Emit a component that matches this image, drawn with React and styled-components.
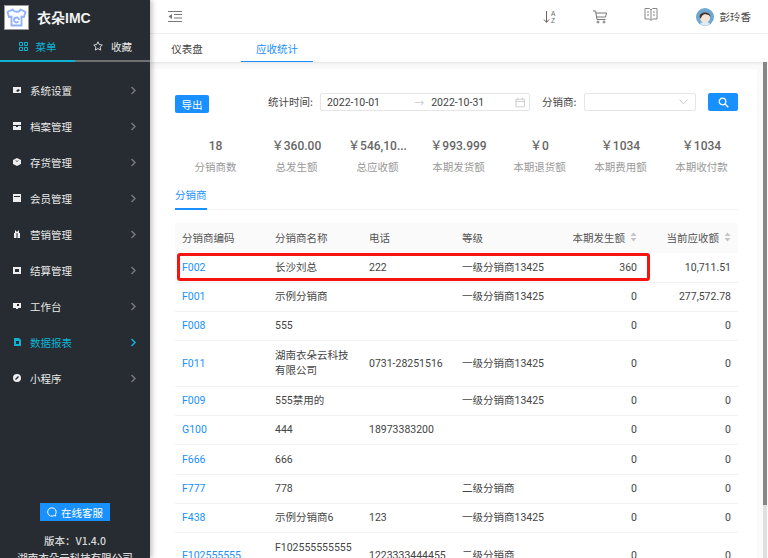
import React from "react";
import styled, { createGlobalStyle } from "styled-components";

const Global = createGlobalStyle`
  html, body { margin: 0; padding: 0; width: 768px; height: 558px; overflow: hidden; }
  body { font-family: "Noto Sans CJK SC", "Liberation Sans", sans-serif; font-size: 10.5px; color: #333; }
  * { box-sizing: border-box; }
`;
const Shell = styled.div`display: flex; width: 768px; height: 558px; overflow: hidden; background: #fafafa;`;
const Sidebar = styled.aside`
  width: 150px; flex: none; height: 558px; background: #262c31; display: flex; flex-direction: column;
  box-shadow: 2px 0 5px rgba(0,0,0,.25); position: relative; z-index: 2; overflow: hidden;
`;
const Brand = styled.div`height: 34px; display: flex; align-items: center; padding: 0 0 0 4px; gap: 8px;`;
const Logo = styled.div`width: 25px; height: 25px; background: #fff; border: 1px solid #999; display: flex; align-items: center; justify-content: center;`;
const BrandName = styled.div`color: #f2f2f2; font-size: 14px; font-weight: 700; font-family: "Liberation Sans", "Noto Sans CJK SC", sans-serif;`;
const SideTabs = styled.div`display: flex; height: 28px;`;
const SideTab = styled.div`
  width: 75px; display: flex; align-items: center; justify-content: center; gap: 8px; font-size: 10.5px; padding-bottom: 2px;
  color: ${p => (p.$on ? "#10b2d4" : "#e8e8e8")};
  border-bottom: 2px solid ${p => (p.$on ? "#10b2d4" : "#707070")};
`;
const Menu = styled.nav`padding-top: 10px; display: flex; flex-direction: column;`;
const MenuItem = styled.div`
  height: 36px; display: flex; align-items: center; padding-left: 13px; font-size: 10.5px;
  color: ${p => (p.$on ? "#10b2d4" : "#eaeaea")};
`;
const MenuIcon = styled.span`width: 8px; height: 8px; display: flex; margin-right: 9px;`;
const MenuText = styled.span`flex: 1;`;
const Chevron = styled.svg`width: 7px; height: 9px; margin-right: 13px;`;
const SideFoot = styled.div`margin-top: auto; margin-bottom: -7px; display: flex; flex-direction: column; align-items: center;`;
const Service = styled.div`
  width: 70px; height: 18px; background: #1890ff; color: #fff; display: flex; align-items: center; justify-content: center; gap: 4px; font-size: 10.5px; margin-bottom: 12px;
`;
const Version = styled.div`color: #d8d8d8; font-size: 10.5px; line-height: 15px; font-weight: 500; white-space: nowrap; & + & { margin-top: 2px; }`;
const Main = styled.main`flex: 1; min-width: 0; display: flex; flex-direction: column; position: relative;`;
const Header = styled.header`
  height: 34px; background: #fff; border-bottom: 1px solid #f3f3f3; display: flex; align-items: center; padding: 0 17px 0 18px; flex: none;
`;
const HeadIcons = styled.div`margin-left: auto; display: flex; align-items: center;`;
const HeadIcon = styled.span`display: flex; width: 16px; height: 16px; margin-right: ${p => p.$gap}px; margin-top: ${p => p.$up ? -3 : 0}px;`;
const User = styled.div`display: flex; align-items: center; gap: 6px; font-size: 10.5px; color: #444;`;
const Tabs = styled.div`height: 28px; background: #fff; display: flex; padding-left: 17px; box-shadow: 0 1px 3px rgba(0,0,0,.1); flex: none; position: relative; z-index: 1;`;
const TopTab = styled.div`
  width: ${p => p.$w}px; margin-right: ${p => p.$mr || 0}px; display: flex; align-items: center; justify-content: center; font-size: 10.5px; padding-top: 1px;
  color: ${p => (p.$on ? "#1890ff" : "#444")};
  border-bottom: ${p => (p.$on ? "1px solid #1890ff" : "0")};
`;
const Body = styled.div`flex: 1; display: flex; padding: 7px 0 0 0; min-height: 0; overflow: hidden;`;
const Card = styled.div`background: #fff; width: 607px; padding: 24px 0 0 25px; overflow: hidden; position: relative;`;
const ScrollTrack = styled.div`position: absolute; right: 1px; top: 62px; bottom: 0; width: 4px; background: #e0e0e0; z-index: 3;`;
const ScrollThumb = styled.div`width: 4px; height: 443px; background: #868686;`;
const Filter = styled.div`display: flex; align-items: flex-start; height: 25px;`;
const ExportBtn = styled.button`
  width: 34px; height: 18px; margin: 2px 59px 0 0; padding: 0; border: 0; border-radius: 2px; background: #1890ff; color: #fff; font: inherit; font-size: 10.5px;
`;
const Label = styled.span`line-height: 18px; color: #444; margin-right: ${p => p.$mr}px; white-space: nowrap;`;
const Range = styled.div`
  width: 210px; height: 18px; border: 1px solid #e5e5e5; border-radius: 2px; display: flex; align-items: center; padding: 0 4px 0 6px; color: #444; margin-right: 12px;
`;
const RangeDate = styled.span`width: 88px; font-family: "Roboto", "Noto Sans CJK SC", sans-serif; font-size: 10.5px;`;
const RangeArrow = styled.span`width: 20px; color: #ccc; font-size: 10px; margin-left: 4px; margin-right: -2px;`;
const Picker = styled.div`
  width: 112px; height: 18px; border: 1px solid #e5e5e5; border-radius: 2px; display: flex; align-items: center; justify-content: flex-end; padding-right: 7px; margin-right: 12px;
`;
const SearchBtn = styled.button`width: 30px; height: 18px; padding: 0; border: 0; border-radius: 2px; background: #1890ff; display: flex; align-items: center; justify-content: center;`;
const Stats = styled.div`display: flex; margin-top: 19px;`;
const Stat = styled.div`width: 81px; flex: none; text-align: center;`;
const StatValue = styled.div`color: #666; font-size: 12px; font-weight: 500; line-height: 18px; white-space: nowrap; font-family: "Roboto", "Noto Sans CJK SC", sans-serif;`;
const StatLabel = styled.div`color: #999; font-size: 10.5px; line-height: 16px; margin-top: 4px; white-space: nowrap;`;
const SubTabs = styled.div`width: 563px; height: 25px; margin-top: 10px; border-bottom: 1px solid #f2f2f2; display: flex;`;
const SubTab = styled.div`width: 32px; height: 25px; border-bottom: 2px solid #1890ff; color: #1890ff; line-height: 20px; white-space: nowrap;`;
const TableWrap = styled.div`position: relative; margin-top: 13px; width: 563px;`;
const Table = styled.table`width: 563px; border-collapse: collapse; table-layout: fixed;`;
const Th = styled.th`
  background: #fafafa; height: 30px; padding: 0 7px 2px; font-weight: 400; color: #555; font-size: 10.5px; text-align: ${p => p.$right ? "right" : "left"}; white-space: nowrap;
`;
const ThInner = styled.span`display: inline-flex; align-items: center; gap: 5px;`;
const Td = styled.td`
  height: ${p => p.$h || 29}px; padding: 0 7px; color: ${p => p.$link ? "#1890ff" : "#444"}; font-size: 10.5px; line-height: 15px; border-bottom: 1px solid #f2f2f2;
  text-align: ${p => p.$right ? "right" : "left"}; font-family: "Roboto", "Noto Sans CJK SC", sans-serif;
  white-space: ${p => p.$nowrap ? "nowrap" : "normal"}; word-break: ${p => p.$nowrap ? "normal" : "break-all"};
`;
const Highlight = styled.div`position: absolute; left: 2px; top: 30px; width: 473px; height: 28px; border: 3px solid #f5140f; border-radius: 3px; pointer-events: none;`;

const icons = [
  <path d="M0 1h8v6H0z M5 3l2 1-2 2-2-1z" fillRule="evenodd" />,
  <path d="M0 0h8v3H0zM0 4h3v1h2V4h3v4H0z" />,
  <path d="M4 0l4 2v4L4 8 0 6V2zM4 3L2 2l2 2 2-2z" fillRule="evenodd" />,
  <path d="M0 0h8v8H0zM1 2v1h6V2z" fillRule="evenodd" />,
  <path d="M1 3h2.500v5H1zM4.500 3H7v5H4.500zM2 0l2 2 2-2v3H2z" />,
  <path d="M0 1h8v7H0zM2 3v3h4V3z" fillRule="evenodd" />,
  <path d="M0 1h8v5H5v1H3V6H0zM4 2v2h2V2z" fillRule="evenodd" />,
  <path d="M1 0h5l2 2v6H1zM3 3v3h3V3z" fillRule="evenodd" />,
  <path d="M4 0a4 4 0 110 8 4 4 0 010-8zM2 5l1 1 3-3-1-1z" fillRule="evenodd" />,
];
const menu = ["系统设置", "档案管理", "存货管理", "会员管理", "营销管理", "结算管理", "工作台", "数据报表", "小程序"];

const SortIcon = () => (
  <svg width="7" height="10" viewBox="0 0 7 10"><path d="M3.500 0.500L6.500 4H.5z" fill="#c4c4c4" /><path d="M3.500 9.500L.5 6h6z" fill="#c4c4c4" /></svg>
);
const rows = [
  { c: "F002", n: "长沙刘总", t: "222", l: "一级分销商13425", a: "360", b: "10,711.51" },
  { c: "F001", n: "示例分销商", t: "", l: "一级分销商13425", a: "0", b: "277,572.78" },
  { c: "F008", n: "555", t: "", l: "", a: "0", b: "0" },
  { c: "F011", n: "湖南衣朵云科技有限公司", t: "0731-28251516", l: "一级分销商13425", a: "0", b: "0", h: 46 },
  { c: "F009", n: "555禁用的", t: "", l: "一级分销商13425", a: "0", b: "0" },
  { c: "G100", n: "444", t: "18973383200", l: "", a: "0", b: "0" },
  { c: "F666", n: "666", t: "", l: "", a: "0", b: "0", h: 30 },
  { c: "F777", n: "778", t: "", l: "二级分销商", a: "0", b: "0" },
  { c: "F438", n: "示例分销商6", t: "123", l: "一级分销商13425", a: "0", b: "0" },
  { c: "F102555555", n: "F1025555555555", t: "1223333444455", l: "二级分销商", a: "0", b: "0", h: 46 },
];
const stats = [["18", "分销商数"], ["\uFFE5360.00", "总发生额"], ["\uFFE5546,10...", "总应收额"], ["\uFFE5993.999", "本期发货额"], ["\uFFE50", "本期退货额"], ["\uFFE51034", "本期费用额"], ["\uFFE51034", "本期收付款"]];

export default function App() {
  return (
    <Shell>
      <Global />
      <Sidebar>
        <Brand>
          <Logo>
            <svg width="21" height="21" viewBox="0 0 21 21" fill="none" stroke="#8fb0ff" strokeWidth="1.800">
              <path d="M6.500 2.500L1.500 5l1.500 5 2.500-.5V18.500h10V9.500l2.500.5 1.500-5-5-2.500c-1 3-6 3-8 0z" />
              <path d="M8 13a2.500 2.500 0 115 0M8 13a2.500 2.500 0 004.500 1.500" />
            </svg>
          </Logo>
          <BrandName>衣朵IMC</BrandName>
        </Brand>
        <SideTabs>
          <SideTab $on>
            <svg width="9" height="9" viewBox="0 0 9 9" fill="none" stroke="#10b2d4"><path d="M.5.500h3v3h-3zM5.500.500h3v3h-3zM.5 5.500h3v3h-3zM5.500 5.500h3v3h-3z" /></svg>
            菜单
          </SideTab>
          <SideTab>
            <svg width="10" height="10" viewBox="0 0 10 10" fill="none" stroke="#e8e8e8" strokeWidth=".9"><path d="M5 .8l1.300 2.800 3 .4-2.200 2.100.6 3L5 7.600 2.300 9.100l.6-3L.7 4l3-.4z" /></svg>
            收藏
          </SideTab>
        </SideTabs>
        <Menu>
          {menu.map((m, i) => (
            <MenuItem key={m} $on={i === 7}>
              <MenuIcon>
                <svg width="8" height="8" viewBox="0 0 8 8" fill={i === 7 ? "#10b2d4" : "#eee"}>{icons[i]}</svg>
              </MenuIcon>
              <MenuText>{m}</MenuText>
              <Chevron viewBox="0 0 7 9" fill="none" stroke={i === 7 ? "#10b2d4" : "#777"} strokeWidth="1.500"><path d="M1.500 1l3.500 3.500L1.500 8" /></Chevron>
            </MenuItem>
          ))}
        </Menu>
        <SideFoot>
          <Service>
            <svg width="10" height="10" viewBox="0 0 10 10" fill="none" stroke="#fff"><path d="M5 .8a4.200 4.200 0 013.500 6.500l.3 1.700-1.800-.4A4.200 4.200 0 115 .8z" /></svg>
            在线客服
          </Service>
          <Version>版本：V1.4.0</Version>
          <Version>湖南衣朵云科技有限公司</Version>
        </SideFoot>
      </Sidebar>
      <Main>
        <Header>
          <svg width="15" height="13" viewBox="0 0 15 13" fill="none" stroke="#777"><path d="M0 1.500h14M6 4.500h8M6 8h8M0 11.500h14" /><path d="M4 4v5L.5 6.500z" fill="#777" stroke="none" /></svg>
          <HeadIcons>
            <HeadIcon $gap={33}>
              <svg width="16" height="16" viewBox="0 0 16 16" fill="none" stroke="#666"><path d="M3.500 2v11M1 10.500l2.500 3 2.500-3" /><text x="8" y="7" fontSize="6.500" fill="#666" stroke="none" fontFamily="Liberation Sans">A</text><text x="8" y="14" fontSize="6.500" fill="#666" stroke="none" fontFamily="Liberation Sans">Z</text></svg>
            </HeadIcon>
            <HeadIcon $gap={35}>
              <svg width="16" height="16" viewBox="0 0 16 16" fill="none" stroke="#777"><path d="M1 2h2.500l1.500 8.500h8.500M4 4h10.500l-1 4H5" /><circle cx="6" cy="13" r="1" /><circle cx="12" cy="13" r="1" /></svg>
            </HeadIcon>
            <HeadIcon $gap={37} $up>
              <svg width="16" height="16" viewBox="0 0 16 16" fill="none" stroke="#888"><path d="M2 1.500h4.500L8 3l1.500-1.500H14v10.500H9.500L8 13.500 6.500 12H2zM8 3v10M4 5h2M10 5h2M4 8h2M10 8h2" /></svg>
            </HeadIcon>
            <User>
              <svg width="18" height="18" viewBox="0 0 18 18">
                <circle cx="9" cy="9" r="9" fill="#6ea8d0" />
                <circle cx="9" cy="10" r="5" fill="#f4e4d8" />
                <path d="M3.500 9C3 3.500 14 2.500 14.500 8.500 12 6 8 5.500 6.500 7.500 5.500 8.500 5 9.500 5 11z" fill="#4c3428" />
                <path d="M4 16c2-3 8-3 10 0a9 9 0 01-10 0z" fill="#dfeaf2" />
              </svg>
              彭玲香
            </User>
          </HeadIcons>
        </Header>
        <Tabs>
          <TopTab $w={40} $mr={34}>仪表盘</TopTab>
          <TopTab $w={72} $on>应收统计</TopTab>
        </Tabs>
        <Body>
          <Card>
            <Filter>
              <ExportBtn>导出</ExportBtn>
              <Label $mr={7}>统计时间:</Label>
              <Range>
                <RangeDate>2022-10-01</RangeDate>
                <RangeArrow>→</RangeArrow>
                <RangeDate>2022-10-31</RangeDate>
                <svg style={{ marginLeft: "auto" }} width="11" height="11" viewBox="0 0 11 11" fill="none" stroke="#ccc"><path d="M1 2h9v8H1zM1 4.500h9M3 .5v2.500M8 .5v2.500" /></svg>
              </Range>
              <Label $mr={8}>分销商:</Label>
              <Picker>
                <svg width="9" height="6" viewBox="0 0 9 6" fill="none" stroke="#ccc"><path d="M.5.500L4.500 5l4-4.500" /></svg>
              </Picker>
              <SearchBtn>
                <svg width="11" height="11" viewBox="0 0 11 11" fill="none" stroke="#fff" strokeWidth="1.300"><circle cx="4.500" cy="4.500" r="3.300" /><path d="M7 7l3.300 3.300" /></svg>
              </SearchBtn>
            </Filter>
            <Stats>
              {stats.map(([v, l]) => (
                <Stat key={l}>
                  <StatValue>{v}</StatValue>
                  <StatLabel>{l}</StatLabel>
                </Stat>
              ))}
            </Stats>
            <SubTabs><SubTab>分销商</SubTab></SubTabs>
            <TableWrap>
              <Table>
                <colgroup>
                  <col style={{ width: 93 }} /><col style={{ width: 94 }} /><col style={{ width: 93 }} /><col style={{ width: 94 }} /><col style={{ width: 95 }} /><col style={{ width: 94 }} />
                </colgroup>
                <thead>
                  <tr>
                    <Th>分销商编码</Th><Th>分销商名称</Th><Th>电话</Th><Th>等级</Th>
                    <Th $right><ThInner>本期发生额<SortIcon /></ThInner></Th>
                    <Th $right><ThInner>当前应收额<SortIcon /></ThInner></Th>
                  </tr>
                </thead>
                <tbody>
                  {rows.map(r => (
                    <tr key={r.c}>
                      <Td $link $h={r.h}>{r.c}</Td><Td $h={r.h}>{r.n}</Td><Td $h={r.h} $nowrap>{r.t}</Td><Td $h={r.h} $nowrap>{r.l}</Td>
                      <Td $right $h={r.h}>{r.a}</Td><Td $right $h={r.h}>{r.b}</Td>
                    </tr>
                  ))}
                </tbody>
              </Table>
              <Highlight />
            </TableWrap>
          </Card>
        </Body>
        <ScrollTrack><ScrollThumb /></ScrollTrack>
      </Main>
    </Shell>
  );
}
